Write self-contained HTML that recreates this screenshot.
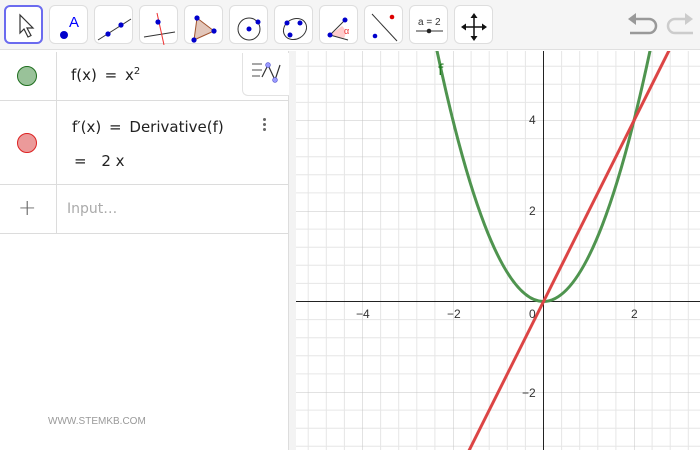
<!DOCTYPE html>
<html><head><style>
*{margin:0;padding:0;box-sizing:border-box}
body{width:700px;height:450px;overflow:hidden;background:#fff;font-family:"Liberation Sans","DejaVu Sans",sans-serif;position:relative}
.tb{position:absolute;left:0;top:0;width:700px;height:50px;background:#f5f5f5;border-bottom:1px solid #e0e0e0}
.btn{position:absolute;top:5px;width:39px;height:39px;background:#fff;border:1px solid #dedede;border-radius:6px}
.btn svg{position:absolute;left:0;top:0}
.sel{border:2px solid #6b6bef}
.t{position:absolute;font-size:15px;color:#222;font-family:"DejaVu Sans","Liberation Sans",sans-serif}
.hl{position:absolute;left:0;width:288px;height:1px;background:#dcdcdc}
</style></head><body>
<div class="tb">
<div class="btn sel" style="left:4px"><svg width="39" height="39"><path d="M14 8 L14 26 L18 22 L22 30 L25 28.5 L21 21 L27 21 Z" fill="#fff" stroke="#333" stroke-width="1.2"/></svg></div>
<div class="btn" style="left:49px"><svg width="39" height="39"><circle cx="14" cy="29" r="4" fill="#00c"/><text x="19" y="21" font-size="15" fill="#00f" font-family="Liberation Sans">A</text></svg></div>
<div class="btn" style="left:94px"><svg width="39" height="39"><line x1="3" y1="34" x2="36" y2="13" stroke="#333"/><circle cx="13" cy="28" r="2.6" fill="#00c"/><circle cx="26" cy="19" r="2.6" fill="#00c"/></svg></div>
<div class="btn" style="left:139px"><svg width="39" height="39"><line x1="4" y1="31" x2="35" y2="26" stroke="#333"/><line x1="17" y1="7" x2="24" y2="39" stroke="#e33"/><circle cx="18" cy="16" r="2.6" fill="#00c"/></svg></div>
<div class="btn" style="left:184px"><svg width="39" height="39"><path d="M12 12 L29 25 L9 34 Z" fill="#e2c6ba" stroke="#a0522d"/><circle cx="12" cy="12" r="2.6" fill="#00c"/><circle cx="29" cy="25" r="2.6" fill="#00c"/><circle cx="9" cy="34" r="2.6" fill="#00c"/></svg></div>
<div class="btn" style="left:229px"><svg width="39" height="39"><circle cx="19" cy="23" r="11" fill="none" stroke="#333"/><circle cx="19" cy="23" r="2.5" fill="#00c"/><circle cx="28" cy="16" r="2.5" fill="#00c"/></svg></div>
<div class="btn" style="left:274px"><svg width="39" height="39"><ellipse cx="20" cy="23" rx="12" ry="10" transform="rotate(-30 20 23)" fill="none" stroke="#333"/><circle cx="12" cy="17" r="2.5" fill="#00c"/><circle cx="25" cy="17" r="2.5" fill="#00c"/><circle cx="15" cy="29" r="2.5" fill="#00c"/></svg></div>
<div class="btn" style="left:319px"><svg width="39" height="39"><path d="M10 29 L22 20 A9 9 0 0 1 24 32 Z" fill="#fcc"/><line x1="10" y1="29" x2="25" y2="14" stroke="#333"/><line x1="10" y1="29" x2="28" y2="34" stroke="#333"/><circle cx="10" cy="29" r="2.5" fill="#00c"/><circle cx="25" cy="14" r="2.5" fill="#00c"/><text x="24" y="28" font-size="9" fill="#e33">α</text></svg></div>
<div class="btn" style="left:364px"><svg width="39" height="39"><line x1="7" y1="8" x2="32" y2="35" stroke="#333"/><circle cx="10" cy="30" r="2.3" fill="#00c"/><circle cx="27" cy="11" r="2.3" fill="#d00"/></svg></div>
<div class="btn" style="left:409px"><svg width="39" height="39"><text x="8" y="19" font-size="10" fill="#333" font-family="Liberation Sans">a = 2</text><line x1="6" y1="25" x2="33" y2="25" stroke="#333"/><circle cx="19" cy="25" r="2.3" fill="#222"/></svg></div>
<div class="btn" style="left:454px"><svg width="39" height="39"><path d="M19 9 V33 M8 21 H30" stroke="#111" stroke-width="1.5"/><path d="M19 7 L15.5 12 H22.5Z M19 35 L15.5 30 H22.5Z M6 21 L11 17.5 V24.5Z M32 21 L27 17.5 V24.5Z" fill="#111"/></svg></div>
<svg style="position:absolute;left:625px;top:10px" width="70" height="30"><path d="M9 9 H24 A7 7 0 0 1 24 23 H5" fill="none" stroke="#999" stroke-width="2.5"/><path d="M3 9 L11 3 V15Z" fill="#999"/><path d="M65 9 H50 A7 7 0 0 0 50 23 H68" fill="none" stroke="#ccc" stroke-width="2.5"/><path d="M70 9 L62 3 V15Z" fill="#ccc" transform="translate(-2 0)"/></svg>
</div>

<svg style="position:absolute;left:0;top:51px" width="700" height="399">
<defs>
<pattern id="g" patternUnits="userSpaceOnUse" x="543.5" y="250.5" width="90.5" height="90.5">
<path d="M18.1 0V90.5M36.2 0V90.5M54.3 0V90.5M72.4 0V90.5M0 18.1H90.5M0 36.2H90.5M0 54.3H90.5M0 72.4H90.5" stroke="#e6e6e6" stroke-width="1"/>
<path d="M0 0V90.5M0 0H90.5" stroke="#c4c4c4" stroke-width="1"/>
</pattern>
<clipPath id="c"><rect x="296" y="0" width="404" height="399"/></clipPath>
</defs>
<rect x="296" y="0" width="404" height="399" fill="url(#g)"/>
<rect x="288" y="0" width="8" height="399" fill="#f3f3f3"/>
<line x1="288.5" y1="0" x2="288.5" y2="399" stroke="#ddd"/>
<line x1="296" y1="250.5" x2="700" y2="250.5" stroke="#222"/>
<line x1="543.5" y1="0" x2="543.5" y2="399" stroke="#222"/>
<g clip-path="url(#c)" fill="none" stroke-width="3">
<path d="M425.85 -55.4 Q543.5 556.4 661.15 -55.4" stroke="#4f944f"/>
<path d="M466.6 404.4 L701.9 -66.3" stroke="#dc4545"/>
</g>
<g font-family="Liberation Sans" font-size="12" fill="#333">
<text x="356" y="267">−4</text><text x="447" y="267">−2</text><text x="529" y="267">0</text><text x="631" y="267">2</text>
<text x="529" y="73">4</text><text x="529" y="164">2</text><text x="522" y="346">−2</text>
</g>
</svg>
<div style="position:absolute;left:438px;top:61px;font-size:15px;line-height:18px;color:#1e7a1e;font-family:'DejaVu Sans',sans-serif">f</div>

<div style="position:absolute;left:56px;top:52px;width:1px;height:182px;background:#dcdcdc"></div>
<div class="hl" style="top:100px"></div>
<div class="hl" style="top:184px"></div>
<div class="hl" style="top:233px"></div>
<div style="position:absolute;left:17px;top:66px;width:20px;height:20px;border-radius:50%;background:#99c299;border:1px solid #1e6e1e"></div>
<div style="position:absolute;left:17px;top:133px;width:20px;height:20px;border-radius:50%;background:#eb9a9a;border:1px solid #d22"></div>
<div class="t" style="left:71px;top:66px">f(x) <span style="margin:0 3px">=</span> x<sup style="font-size:10px">2</sup></div>
<div class="t" style="left:72px;top:118px">f′(x) <span style="margin:0 3px">=</span> Derivative(f)</div>
<div class="t" style="left:74px;top:152px">= <span style="margin-left:10px">2 x</span></div>
<div style="position:absolute;left:263px;top:118px;width:3px;height:3px;border-radius:50%;background:#666;box-shadow:0 5px 0 #666,0 10px 0 #666"></div>
<div class="t" style="left:18px;top:196px;font-size:22px;color:#666;font-weight:300">+</div>
<div class="t" style="left:67px;top:201px;font-size:14px;color:#aaa">Input…</div>
<div style="position:absolute;left:242px;top:53px;width:47px;height:43px;background:#fff;border:1px solid #e2e2e2;border-right:none;border-top:none;border-radius:0 0 0 6px">
<svg width="46" height="42"><path d="M9 11H19M9 17H19M9 23H17" stroke="#888" stroke-width="1.6"/><path d="M19 24 L25 12 L32 27 L37 12" fill="none" stroke="#333" stroke-width="1.2"/><circle cx="25" cy="12" r="2.4" fill="#99f" stroke="#55c" stroke-width=".6"/><circle cx="32" cy="27" r="2.4" fill="#99f" stroke="#55c" stroke-width=".6"/></svg></div>
<div style="position:absolute;left:48px;top:416px;font-size:10px;color:#999;font-family:'Liberation Sans',sans-serif">WWW.STEMKB.COM</div>
</body></html>
